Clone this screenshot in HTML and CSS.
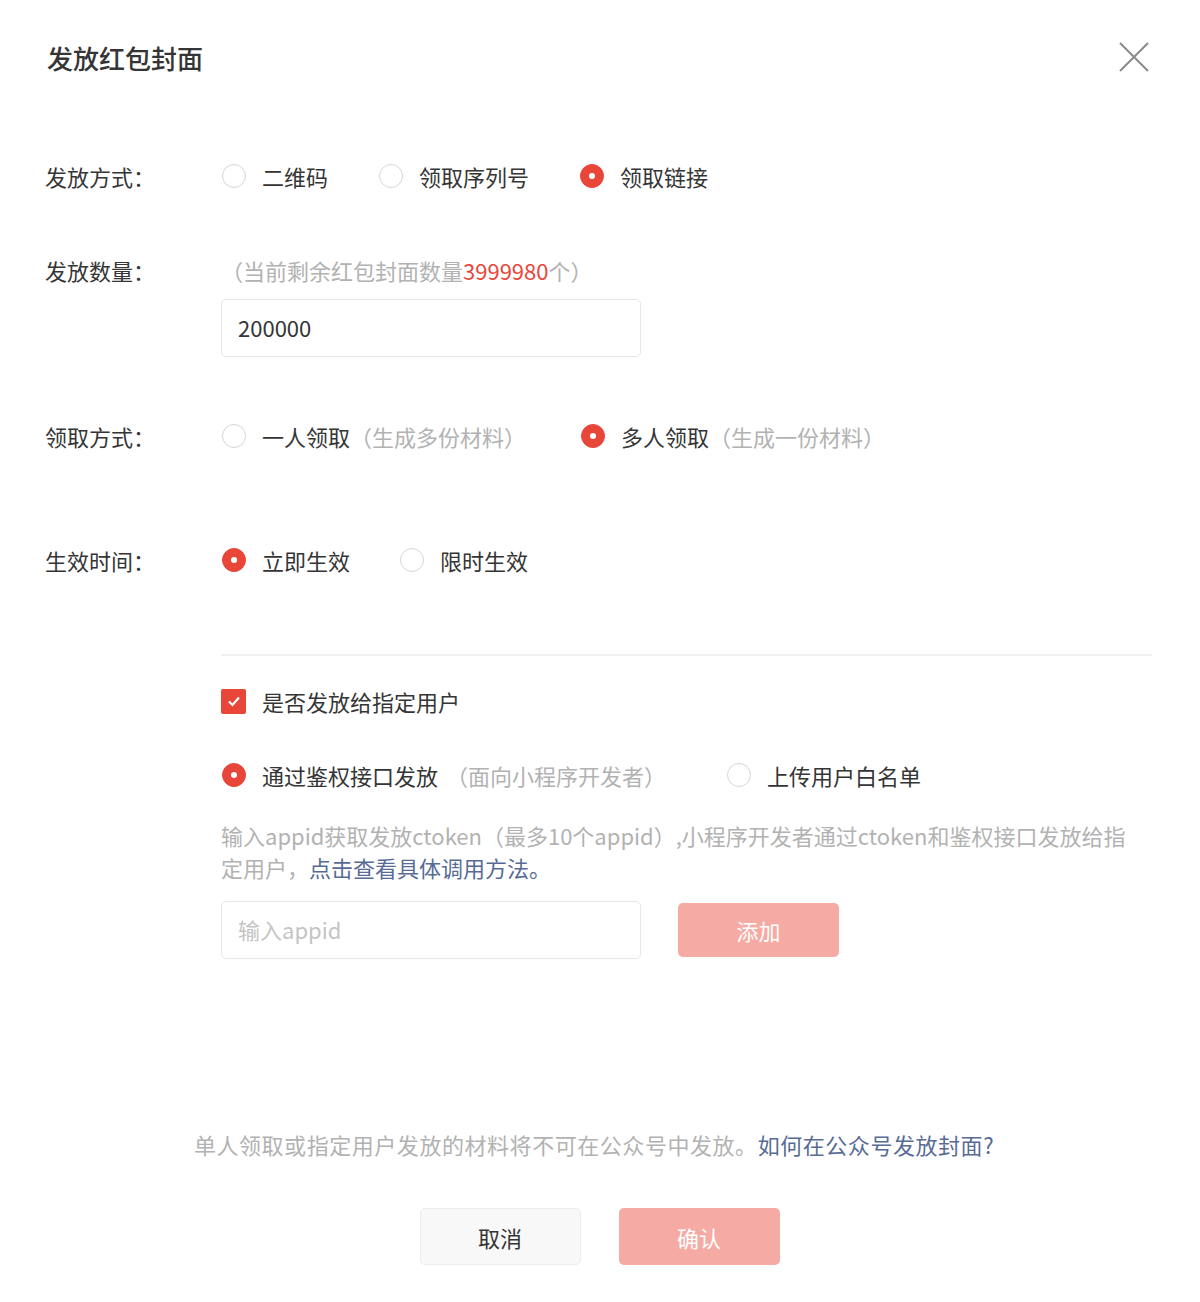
FILE: index.html
```html
<!DOCTYPE html>
<html lang="zh-CN">
<head>
<meta charset="utf-8">
<title>发放红包封面</title>
<link rel="stylesheet" href="styles.css">
</head>
<body>
<div class="dialog">
  <div class="header">
    <div class="title">发放红包封面</div>
    <svg class="close" width="32" height="32" viewBox="0 0 32 32"><path d="M2 2 L30 30 M30 2 L2 30" stroke="#8a8a8a" stroke-width="2" fill="none"/></svg>
  </div>

  <div class="row row1">
    <div class="label">发放方式：</div>
    <div class="content options">
      <span class="opt"><span class="radio"></span>二维码</span>
      <span class="opt"><span class="radio"></span>领取序列号</span>
      <span class="opt"><span class="radio on"></span>领取链接</span>
    </div>
  </div>

  <div class="row row2">
    <div class="label">发放数量：</div>
    <div class="content">
      <div class="hint">（当前剩余红包封面数量<span class="red">3999980</span>个）</div>
      <div class="input">200000</div>
    </div>
  </div>

  <div class="row row3">
    <div class="label">领取方式：</div>
    <div class="content options">
      <span class="opt"><span class="radio"></span>一人领取<span class="sub">（生成多份材料）</span></span>
      <span class="opt"><span class="radio on"></span>多人领取<span class="sub">（生成一份材料）</span></span>
    </div>
  </div>

  <div class="row row4">
    <div class="label">生效时间：</div>
    <div class="content options">
      <span class="opt"><span class="radio on"></span>立即生效</span>
      <span class="opt"><span class="radio"></span>限时生效</span>
    </div>
  </div>

  <div class="section">
    <div class="divider"></div>
    <div class="check-row"><span class="checkbox"><svg width="14" height="12" viewBox="0 0 14 12"><path d="M2 6.5 L5.5 10 L12 2.5" stroke="#fff" stroke-width="2.2" fill="none"/></svg></span>是否发放给指定用户</div>
    <div class="options sub-options">
      <span class="opt"><span class="radio on"></span>通过鉴权接口发放<span class="sub sp">（面向小程序开发者）</span></span>
      <span class="opt"><span class="radio"></span>上传用户白名单</span>
    </div>
    <div class="desc">输入appid获取发放ctoken（最多10个appid）,小程序开发者通过ctoken和鉴权接口发放给指定用户，<span class="link">点击查看具体调用方法。</span></div>
    <div class="add-row">
      <div class="input placeholder">输入appid</div>
      <div class="btn primary small">添加</div>
    </div>
  </div>

  <div class="note">单人领取或指定用户发放的材料将不可在公众号中发放。<span class="link">如何在公众号发放封面?</span></div>

  <div class="footer">
    <div class="btn default">取消</div>
    <div class="btn primary">确认</div>
  </div>
</div>
</body>
</html>
```

FILE: styles.css
```css
* { box-sizing: border-box; }
html, body { margin: 0; padding: 0; background: #fff; }
body {
  width: 1200px;
  height: 1302px;
  font-family: "Noto Sans CJK SC", "Noto Sans", sans-serif;
  font-size: 22px;
  color: #353535;
}
.dialog {
  padding: 40px 48px 0 45px;
}
.header {
  display: flex;
  justify-content: space-between;
  align-items: center;
  height: 36px;
}
.title {
  font-size: 26px;
  line-height: 36px;
  font-weight: 500;
  color: #353535;
  padding-left: 2px;
}
.close { margin-right: 2px; margin-top: -2px; }

.row {
  display: grid;
  grid-template-columns: 176px 1fr;
  align-items: start;
}
.label { line-height: 32px; color: #353535; white-space: nowrap; }
.row1 { margin-top: 84px; }
.row2 { margin-top: 62px; }
.row3 { margin-top: 63px; }
.row4 { margin-top: 92px; }

.options {
  display: flex;
  align-items: center;
  line-height: 32px;
}
.opt {
  display: inline-flex;
  align-items: center;
  margin-right: 50px;
  white-space: nowrap;
}
.radio {
  width: 24px;
  height: 24px;
  border: 1.5px solid #d6d6d6;
  border-radius: 50%;
  margin-right: 16px;
  margin-left: 1px;
  display: inline-block;
  flex: none;
  position: relative;
}
.radio.on {
  background: #e9463a;
  border-color: #e9463a;
}
.radio.on::after {
  content: "";
  position: absolute;
  left: 50%;
  top: 50%;
  width: 6px;
  height: 6px;
  margin: -3px 0 0 -3px;
  background: #fff;
  border-radius: 50%;
}
.sub { color: #b2b2b2; }
.sub.sp { margin-left: 8px; }
.row3 .opt:first-child { margin-right: 54px; }
.row4 .opt:first-child { margin-right: 49px; }

.hint { line-height: 32px; color: #b2b2b2; }
.red { color: #e9463a; }

.input {
  width: 420px;
  height: 58px;
  border: 1.5px solid #e7e7e7;
  border-radius: 5px;
  padding: 0 16px;
  line-height: 55px;
  color: #353535;
}
.row2 .input { margin-top: 13px; }
.input.placeholder { color: #c4c4c4; }

.section {
  margin-left: 176px;
}
.divider {
  margin-top: 78px;
  height: 2px;
  background: #f0f0f0;
}
.check-row {
  margin-top: 29px;
  display: flex;
  align-items: center;
  line-height: 32px;
}
.checkbox {
  width: 25px;
  height: 25px;
  background: #e9463a;
  border-radius: 2px;
  margin-right: 16px;
  display: inline-flex;
  align-items: center;
  justify-content: center;
}
.sub-options { margin-top: 42px; }
.sub-options .opt:first-child { margin-right: 60px; }
.desc {
  margin-top: 28px;
  line-height: 32px;
  color: #b2b2b2;
  padding-right: 16px;
}
.link { color: #576b95; }
.add-row {
  margin-top: 18px;
  display: flex;
  align-items: center;
  gap: 37px;
}

.btn {
  width: 161px;
  height: 57px;
  border-radius: 5px;
  display: flex;
  align-items: center;
  justify-content: center;
  font-size: 22px;
}
.btn.small { height: 54px; }
.btn.primary { background: #f5aaa3; color: #fff; }
.btn.default { background: #f8f8f8; border: 1.5px solid #ececec; color: #353535; }

.note {
  margin-top: 169px;
  text-align: center;
  line-height: 32px;
  color: #b2b2b2;
  letter-spacing: 0.55px;
  margin-right: -3px;
  padding-right: 12px;
}
.footer {
  margin-top: 48px;
  display: flex;
  justify-content: center;
  gap: 38px;
  padding-left: 2px;
}
```
